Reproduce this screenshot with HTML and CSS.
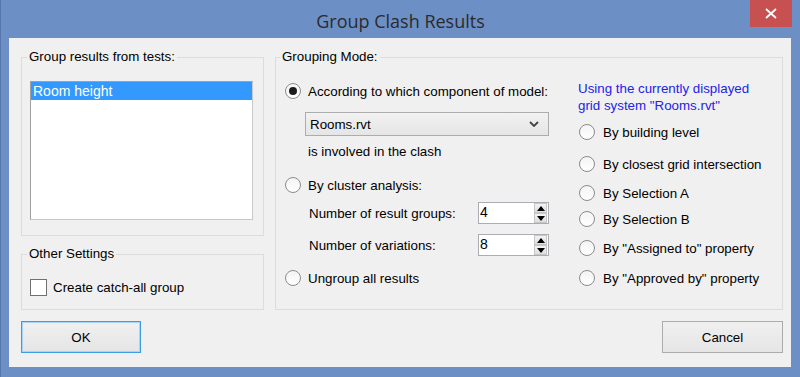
FILE: index.html
```html
<!DOCTYPE html>
<html lang="en">
<head>
    <meta charset="UTF-8">
    <meta name="viewport" content="width=device-width, initial-scale=1.0">
    <title>Group Clash Results</title>
    <link rel="stylesheet" href="styles.css">
</head>
<body>
    <div class="window">
        <div class="titlebar">
            <span class="title">Group Clash Results</span>
            <button class="close" aria-label="Close">
                <svg width="12" height="11" viewBox="0 0 12 11">
                    <path d="M1 1 L11 10 M11 1 L1 10" stroke="#fff" stroke-width="1.8" fill="none"/>
                </svg>
            </button>
        </div>

        <div class="panel">
            <div class="groups">
                <div class="left-col">
                    <fieldset class="group tests">
                        <legend>Group results from tests:</legend>
                        <div class="listbox">
                            <div class="list-item selected">Room height</div>
                        </div>
                    </fieldset>
                    <fieldset class="group other">
                        <legend>Other Settings</legend>
                        <div class="check-row">
                            <span class="checkbox"></span>
                            <span>Create catch-all group</span>
                        </div>
                    </fieldset>
                </div>

                <fieldset class="group mode">
                    <legend>Grouping Mode:</legend>
                    <div class="mode-cols">
                        <div class="mode-main">
                            <div class="radio-row">
                                <span class="radio checked"></span>
                                <span>According to which component of model:</span>
                            </div>
                            <div class="combo">
                                <span>Rooms.rvt</span>
                                <svg width="10" height="6" viewBox="0 0 10 6">
                                    <path d="M1 1 L5 5 L9 1" stroke="#444" stroke-width="1.8" fill="none"/>
                                </svg>
                            </div>
                            <div class="note">is involved in the clash</div>
                            <div class="radio-row cluster">
                                <span class="radio"></span>
                                <span>By cluster analysis:</span>
                            </div>
                            <div class="spin-row first">
                                <span class="spin-label">Number of result groups:</span>
                                <div class="spin">
                                    <span class="spin-value">4</span>
                                    <span class="spin-buttons">
                                        <span class="spin-up"></span>
                                        <span class="spin-down"></span>
                                    </span>
                                </div>
                            </div>
                            <div class="spin-row second">
                                <span class="spin-label">Number of variations:</span>
                                <div class="spin">
                                    <span class="spin-value">8</span>
                                    <span class="spin-buttons">
                                        <span class="spin-up"></span>
                                        <span class="spin-down"></span>
                                    </span>
                                </div>
                            </div>
                            <div class="radio-row ungroup">
                                <span class="radio"></span>
                                <span>Ungroup all results</span>
                            </div>
                        </div>

                        <div class="mode-grid">
                            <div class="hint">Using the currently displayed<br>grid system "Rooms.rvt"</div>
                            <div class="radio-row r1"><span class="radio"></span><span>By building level</span></div>
                            <div class="radio-row r2"><span class="radio"></span><span>By closest grid intersection</span></div>
                            <div class="radio-row r3"><span class="radio"></span><span>By Selection A</span></div>
                            <div class="radio-row r4"><span class="radio"></span><span>By Selection B</span></div>
                            <div class="radio-row r5"><span class="radio"></span><span>By "Assigned to" property</span></div>
                            <div class="radio-row r6"><span class="radio"></span><span>By "Approved by" property</span></div>
                        </div>
                    </div>
                </fieldset>
            </div>

            <div class="buttons">
                <button class="btn default">OK</button>
                <button class="btn cancel">Cancel</button>
            </div>
        </div>
    </div>
</body>
</html>
```

FILE: styles.css
```css
* {
    box-sizing: border-box;
}

body {
    margin: 0;
    font-family: "Liberation Sans", Arial, sans-serif;
    font-size: 10pt;
    color: #000;
    background-color: #6c8fc6;
}

.window {
    width: 800px;
    height: 377px;
    background-color: #6c8fc6;
    border-left: 1px solid #5878ad;
    display: flex;
    flex-direction: column;
    position: relative;
}

.titlebar {
    height: 38px;
    padding-top: 3px;
    display: flex;
    align-items: center;
    justify-content: center;
}

.title {
    font-family: "Open Sans", "Noto Sans", sans-serif;
    font-size: 18px;
    color: #2b2b2b;
}

.close {
    position: absolute;
    top: 0;
    right: 8px;
    width: 42px;
    height: 27px;
    padding: 0;
    border: none;
    background-color: #c75050;
    display: flex;
    align-items: center;
    justify-content: center;
}

.panel {
    flex: 1;
    margin: 0 9px 10px 8px;
    padding: 11px 8px 14px 12px;
    background-color: #f0f0f0;
    display: flex;
    flex-direction: column;
}

.groups {
    display: flex;
    gap: 11px;
    height: 261px;
}

.left-col {
    width: 243px;
    display: flex;
    flex-direction: column;
}

.group {
    margin: 0;
    min-width: 0;
    border: 1px solid #dcdcdc;
}

.group legend {
    padding: 0 2px;
    margin-left: -3px;
    line-height: 16px;
}

.tests {
    height: 188px;
    padding: 16px 0 0 8px;
}

.listbox {
    width: 223px;
    height: 139px;
    background-color: #fff;
    border: 1px solid #a0a0a0;
    border-right-color: #c8c8c8;
    border-bottom-color: #c8c8c8;
}

.list-item {
    height: 18px;
    line-height: 18px;
    padding-left: 2px;
    font-size: 14px;
}

.list-item.selected {
    background-color: #3399ff;
    color: #fff;
}

.other {
    margin-top: 10px;
    height: 64px;
    padding: 17px 0 0 8px;
}

.check-row {
    display: flex;
    align-items: center;
    gap: 6px;
    height: 17px;
}

.checkbox {
    width: 17px;
    height: 17px;
    background-color: #fff;
    border: 1px solid #707070;
}

.mode {
    flex: 1;
    padding: 0 8px 0 9px;
}

.mode legend {
    margin-left: -5px;
}

.mode-cols {
    display: flex;
}

.mode-main {
    width: 293px;
    padding-top: 17px;
}

.mode-grid {
    padding-top: 15px;
}

.radio-row {
    display: flex;
    align-items: center;
    gap: 7px;
    height: 18px;
}

.radio {
    width: 16px;
    height: 16px;
    border-radius: 50%;
    border: 1px solid #8c8c8c;
    background: linear-gradient(#f4f4f4, #ffffff);
    display: flex;
    align-items: center;
    justify-content: center;
}

.radio.checked::after {
    content: "";
    width: 8px;
    height: 8px;
    border-radius: 50%;
    background-color: #1a1a1a;
}

.combo {
    margin: 12px 0 0 20px;
    width: 244px;
    height: 24px;
    padding: 0 9px 0 4px;
    border: 1px solid #acacac;
    background: linear-gradient(#f2f2f2, #e5e5e5);
    display: flex;
    align-items: center;
    justify-content: space-between;
}

.note {
    margin: 7px 0 0 23px;
    height: 18px;
    line-height: 18px;
}

.cluster {
    margin-top: 15px;
}

.spin-row {
    margin-left: 24px;
    height: 22px;
    display: flex;
    align-items: center;
}

.spin-row.first {
    margin-top: 8px;
}

.spin-row.second {
    margin-top: 10px;
}

.spin-label {
    width: 169px;
}

.spin {
    width: 71px;
    height: 22px;
    background-color: #fff;
    border: 1px solid #abadb3;
    display: flex;
}

.spin-value {
    flex: 1;
    padding-left: 1px;
    line-height: 18px;
    font-size: 14px;
}

.spin-buttons {
    width: 13px;
    margin: 0 1px 0 0;
    display: flex;
    flex-direction: column;
}

.spin-up,
.spin-down {
    flex: 1;
    background: linear-gradient(#f4f4f4, #dedede);
    border: 1px solid #c6c6c6;
    display: flex;
    align-items: center;
    justify-content: center;
}

.spin-up::after {
    content: "";
    border-left: 4px solid transparent;
    border-right: 4px solid transparent;
    border-bottom: 5px solid #000;
}

.spin-down::after {
    content: "";
    border-left: 4px solid transparent;
    border-right: 4px solid transparent;
    border-top: 5px solid #000;
}

.ungroup {
    margin-top: 13px;
}

.hint {
    color: #2222ee;
    line-height: 17px;
}

.mode-grid .radio-row {
    gap: 8px;
}

.mode-grid .radio {
    margin-left: 1px;
}

.r1 { margin-top: 9px; }
.r2 { margin-top: 14px; }
.r3 { margin-top: 11px; }
.r4 { margin-top: 8px; }
.r5 { margin-top: 11px; }
.r6 { margin-top: 12px; }

.buttons {
    margin-top: 11px;
    display: flex;
    justify-content: space-between;
}

.btn {
    height: 32px;
    font-family: "Liberation Sans", Arial, sans-serif;
    font-size: 10pt;
    color: #000;
    background: linear-gradient(#f0f0f0, #e5e5e5);
    border: 1px solid #acacac;
    padding: 0;
}

.btn.default {
    width: 120px;
    border-color: #3c9ce6;
    box-shadow: inset 0 0 0 1px #a9d4f5;
}

.btn.cancel {
    width: 121px;
}
```
